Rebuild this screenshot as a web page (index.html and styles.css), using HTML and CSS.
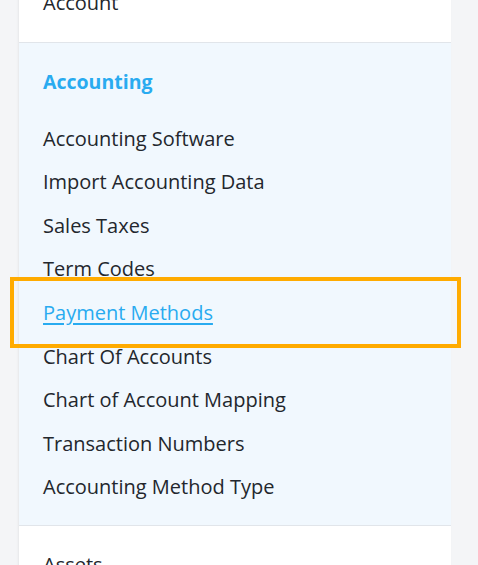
FILE: index.html
```html
<!DOCTYPE html>
<html lang="en">

<head>
  <meta charset="UTF-8">
  <meta name="viewport" content="width=device-width, initial-scale=1.0">
  <title>Settings Menu</title>
  <link rel="stylesheet" href="styles.css">
</head>

<body>
  <div class="sidebar">
    <div class="menu-group menu-group-first">
      <div class="menu-item">Account</div>
    </div>
    <div class="menu-group menu-group-active">
      <div class="menu-heading">Accounting</div>
      <div class="menu-item">Accounting Software</div>
      <div class="menu-item">Import Accounting Data</div>
      <div class="menu-item">Sales Taxes</div>
      <div class="menu-item">Term Codes</div>
      <div class="menu-item menu-item-current">
        <a href="#">Payment Methods</a>
        <span class="highlight-box"></span>
      </div>
      <div class="menu-item">Chart Of Accounts</div>
      <div class="menu-item">Chart of Account Mapping</div>
      <div class="menu-item">Transaction Numbers</div>
      <div class="menu-item">Accounting Method Type</div>
    </div>
    <div class="menu-group">
      <div class="menu-item">Assets</div>
    </div>
  </div>
</body>

</html>
```

FILE: styles.css
```css
body {
  margin: 0;
  padding: 0;
  background-color: #f4f5f7;
  font-family: "Open Sans", "Noto Sans", sans-serif;
  overflow: hidden;
  height: 565px;
}

.sidebar {
  margin-left: 19px;
  width: 432px;
  background-color: #ffffff;
  box-shadow: -1px 0 2px rgba(0, 0, 0, 0.06);
}

.menu-group {
  padding: 17px 0;
  border-bottom: 1px solid #e1e5ea;
}

.menu-group-first {
  margin-top: -36px;
}

.menu-group-active {
  padding-bottom: 16px;
  background-color: #f1f8fe;
}

.menu-heading {
  height: 44px;
  line-height: 44px;
  padding-left: 24px;
  margin-bottom: 13px;
  font-size: 19.5px;
  font-weight: 700;
  color: #29abf0;
}

.menu-item {
  position: relative;
  height: 43.6px;
  line-height: 43.6px;
  padding-left: 24px;
  font-size: 20px;
  color: #23272d;
}

.menu-item-current a {
  color: #29abf0;
  text-decoration: underline;
  text-underline-offset: 3px;
}

.highlight-box {
  position: absolute;
  top: -14px;
  bottom: -13px;
  left: -9px;
  right: -10px;
  border: 4px solid #ffab00;
}
```
